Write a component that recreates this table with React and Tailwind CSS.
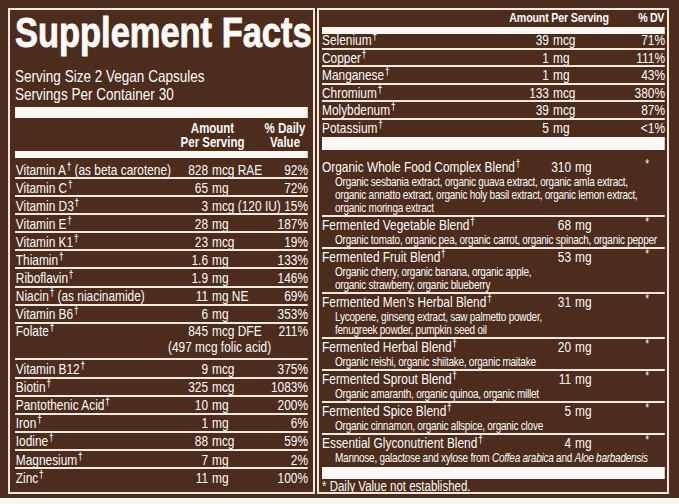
import React from 'react';

// Left column: name, note, amount, unit, %DV, extra line
const LEFT_ROWS = [
    ['Vitamin A', ' (as beta carotene)', '828', 'mcg RAE', '92%'],
    ['Vitamin C', '', '65', 'mg', '72%'],
    ['Vitamin D3', '', '3', 'mcg (120 IU)', '15%'],
    ['Vitamin E', '', '28', 'mg', '187%'],
    ['Vitamin K1', '', '23', 'mcg', '19%'],
    ['Thiamin', '', '1.6', 'mg', '133%'],
    ['Riboflavin', '', '1.9', 'mg', '146%'],
    ['Niacin', ' (as niacinamide)', '11', 'mg NE', '69%'],
    ['Vitamin B6', '', '6', 'mg', '353%'],
    ['Folate', '', '845', 'mcg DFE', '211%', '(497 mcg folic acid)'],
    ['Vitamin B12', '', '9', 'mcg', '375%'],
    ['Biotin', '', '325', 'mcg', '1083%'],
    ['Pantothenic Acid', '', '10', 'mg', '200%'],
    ['Iron', '', '1', 'mg', '6%'],
    ['Iodine', '', '88', 'mcg', '59%'],
    ['Magnesium', '', '7', 'mg', '2%'],
    ['Zinc', '', '11', 'mg', '100%']
];

const MINERALS = [
    ['Selenium', '39', 'mcg', '71%'],
    ['Copper', '1', 'mg', '111%'],
    ['Manganese', '1', 'mg', '43%'],
    ['Chromium', '133', 'mcg', '380%'],
    ['Molybdenum', '39', 'mcg', '87%'],
    ['Potassium', '5', 'mg', '<1%']
];

const BLENDS = [
    {
        name: 'Organic Whole Food Complex Blend', amount: '310', lines: [
            'Organic sesbania extract, organic guava extract, organic amla extract,',
            'organic annatto extract, organic holy basil extract, organic lemon extract,',
            'organic moringa extract'
        ]
    },
    { name: 'Fermented Vegetable Blend', amount: '68', lines: ['Organic tomato, organic pea, organic carrot, organic spinach, organic pepper'] },
    { name: 'Fermented Fruit Blend', amount: '53', lines: ['Organic cherry, organic banana, organic apple,', 'organic strawberry, organic blueberry'] },
    { name: 'Fermented Men’s Herbal Blend', amount: '31', lines: ['Lycopene, ginseng extract, saw palmetto powder,', 'fenugreek powder, pumpkin seed oil'] },
    { name: 'Fermented Herbal Blend', amount: '20', lines: ['Organic reishi, organic shiitake, organic maitake'] },
    { name: 'Fermented Sprout Blend', amount: '11', lines: ['Organic amaranth, organic quinoa, organic millet'] },
    { name: 'Fermented Spice Blend', amount: '5', lines: ['Organic cinnamon, organic allspice, organic clove'] },
    {
        name: 'Essential Glyconutrient Blend', amount: '4', lines: [
            <>Mannose, galactose and xylose from <i>Coffea arabica</i> and <i>Aloe barbadensis</i></>
        ]
    }
];

// No narrow face installed: panels are laid out wide and squeezed to 82% horizontally
const Dag = () => (
    <span className="relative -top-[5px] ml-[1px] text-[10px] font-bold leading-none">†</span>
);

const LeftRow = ({ row, first }) => {
    const [name, note, num, unit, pct, extra] = row;

    if (extra) return (
        <div className="h-[36.7px] border-t-2 border-[#f1e8de]">
            <div className="flex items-end h-[15px] leading-[15px]">
                <span className="w-[192.7px] shrink-0 whitespace-nowrap pl-[1px]">{name}<Dag /></span>
                <span className="w-[42.7px] shrink-0 text-right">{num}</span>
                <span className="flex-1 whitespace-nowrap pl-[4.9px]">{unit}</span>
                <span className="shrink-0 text-right">{pct}</span>
            </div>
            <div className="pl-[186.6px] leading-[17px] whitespace-nowrap">{extra}</div>
        </div>
    );

    return (
        <div className={`flex flex-col justify-end pb-[0.5px] ${first ? 'h-[19.5px]' : 'h-[18.1px] border-t-2 border-[#f1e8de]'}`}>
            <div className="flex items-end leading-[14px]">
                <span className="w-[192.7px] shrink-0 whitespace-nowrap pl-[1px]">{name}<Dag />{note}</span>
                <span className="w-[42.7px] shrink-0 text-right">{num}</span>
                <span className="flex-1 whitespace-nowrap pl-[4.9px]">{unit}</span>
                <span className="shrink-0 text-right">{pct}</span>
            </div>
        </div>
    );
};

const MineralRow = ({ row, first }) => {
    const [name, num, unit, pct] = row;
    return (
        <div className={`flex items-end pb-[0.5px] leading-[14px] ${first ? 'h-[14.2px]' : 'h-[17.5px] border-t-2 border-[#f1e8de]'}`}>
            <span className="flex-1 whitespace-nowrap">{name}<Dag /></span>
            <span className="w-[48.8px] text-right">{num}</span>
            <span className="w-[90.3px] pl-[4.9px]">{unit}</span>
            <span className="w-[51.2px] text-right">{pct}</span>
        </div>
    );
};

const BlendRow = ({ blend, first }) => (
    <div className={first ? 'pt-[9px]' : 'border-t-2 border-[#f1e8de]'}>
        <div className="flex items-start h-[17px] leading-[17px] text-[14.5px]">
            <span className="w-[254.9px] shrink-0 whitespace-nowrap">{blend.name}<Dag /></span>
            <span className="w-[48.8px] shrink-0 text-right">{blend.amount}</span>
            <span className="pl-[4.9px]">mg</span>
            <span className="ml-auto mr-[19.5px] relative -top-[3px] text-[12px]">*</span>
        </div>
        {blend.lines.map((l, i) => (
            <div key={i} className="pl-[15.9px] text-[12.2px] leading-[13px] tracking-[-0.3px] whitespace-nowrap">{l}</div>
        ))}
    </div>
);

const App = () => {
    return (
        <div className="w-[679px] h-[504px] bg-[#f7f5f2] font-['Liberation_Sans',Arial,sans-serif] text-[#fdfbf8]">
            <div className="h-[498px] bg-[#4c2c1d] flex gap-[2px] pl-[8px] pt-[8px]">
                {/* Left panel */}
                <div className="w-[307px] h-[486px] shrink-0 border-2 border-[#f1e8de] pl-[5px] pr-[5px] pt-[2px] text-[14.5px]">
                    <div className="w-[357.3px] origin-top-left scale-x-[0.82]">
                        <h1 className="text-[42px] leading-[42px] font-bold whitespace-nowrap [-webkit-text-stroke:0.9px_#fdfbf8]">Supplement Facts</h1>
                        <div className="mt-[13px] text-[16.5px] leading-[18px]">
                            <div>Serving Size 2 Vegan Capsules</div>
                            <div>Servings Per Container 30</div>
                        </div>
                        <div className="mt-[4px] h-[11px] bg-[#fbf8f4]"></div>
                        <div className="mt-[2.5px] flex font-bold text-[14px] leading-[14.5px]">
                            <div className="w-[195.9px]"></div>
                            <div className="w-[90px] text-center whitespace-nowrap">Amount<br />Per Serving</div>
                            <div className="flex-1"></div>
                            <div className="w-[54px] mr-[1px] text-center whitespace-nowrap">% Daily<br />Value</div>
                        </div>
                        <div className="mt-[1px] h-[7px] bg-[#fbf8f4]"></div>
                        <div>
                            {LEFT_ROWS.map((r, i) => <LeftRow key={r[0]} row={r} first={i === 0} />)}
                        </div>
                    </div>
                </div>

                {/* Right panel */}
                <div className="w-[352px] h-[486px] shrink-0 border-2 border-[#f1e8de] pl-[3px] pr-[2px] text-[14.5px]">
                    <div className="w-[418.3px] origin-top-left scale-x-[0.82]">
                        <div className="pt-[0.5px] flex justify-end font-bold text-[13px] leading-[14px] whitespace-nowrap">
                            <span className="tracking-[-0.2px]">Amount Per Serving</span>
                            <span className="ml-[36px] mr-[1.3px] tracking-[-0.5px]">% DV</span>
                        </div>
                        <div className="mt-[2.5px] h-[6.5px] bg-[#fbf8f4]"></div>
                        {MINERALS.map((r, i) => <MineralRow key={r[0]} row={r} first={i === 0} />)}
                        <div className="mt-[2px] h-[13px] bg-[#fbf8f4]"></div>
                        {BLENDS.map((b, i) => <BlendRow key={b.name} blend={b} first={i === 0} />)}
                        <div className="mt-[1.5px] h-[12.5px] bg-[#fbf8f4]"></div>
                        <div className="text-[14px] leading-[12.5px] pt-[1px]">* Daily Value not established.</div>
                    </div>
                </div>
            </div>
        </div>
    );
};

export default App;
